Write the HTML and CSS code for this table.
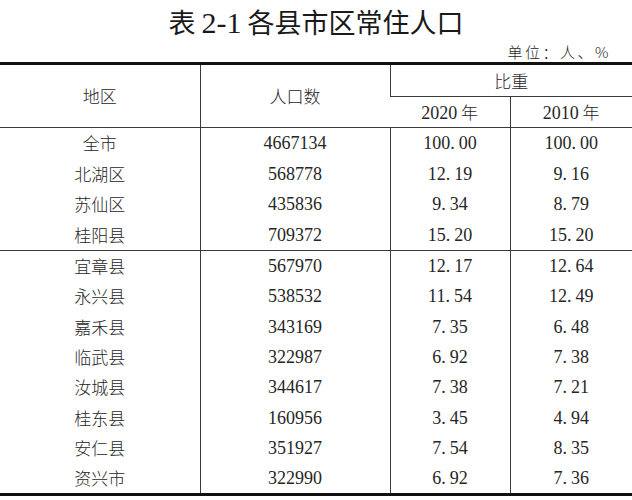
FILE: index.html
```html
<!DOCTYPE html>
<html lang="zh-CN">
<head>
<meta charset="utf-8">
<title>表 2-1 各县市区常住人口</title>
<link rel="stylesheet" href="styles.css">
</head>
<body>
<div class="page">
  <h1 class="title"><span class="cjk">表</span> <span class="num">2-1</span> <span class="cjk">各县市区常住人口</span></h1>
  <div class="unit">单位：人、%</div>
  <table class="data">
    <colgroup>
      <col class="c1"><col class="c2"><col class="c3"><col class="c4">
    </colgroup>
    <thead>
      <tr class="h1row">
        <th rowspan="2">地区</th>
        <th rowspan="2">人口数</th>
        <th colspan="2" class="share">比重</th>
      </tr>
      <tr class="h2row">
        <th class="yr"><span class="num">2020</span> 年</th>
        <th class="yr"><span class="num">2010</span> 年</th>
      </tr>
    </thead>
    <tbody class="g1">
      <tr><td>全市</td><td class="num">4667134</td><td class="num">100<span class="pt">.</span>00</td><td class="num">100<span class="pt">.</span>00</td></tr>
      <tr><td>北湖区</td><td class="num">568778</td><td class="num">12<span class="pt">.</span>19</td><td class="num">9<span class="pt">.</span>16</td></tr>
      <tr><td>苏仙区</td><td class="num">435836</td><td class="num">9<span class="pt">.</span>34</td><td class="num">8<span class="pt">.</span>79</td></tr>
      <tr><td>桂阳县</td><td class="num">709372</td><td class="num">15<span class="pt">.</span>20</td><td class="num">15<span class="pt">.</span>20</td></tr>
    </tbody>
    <tbody class="g2">
      <tr><td>宜章县</td><td class="num">567970</td><td class="num">12<span class="pt">.</span>17</td><td class="num">12<span class="pt">.</span>64</td></tr>
      <tr><td>永兴县</td><td class="num">538532</td><td class="num">11<span class="pt">.</span>54</td><td class="num">12<span class="pt">.</span>49</td></tr>
      <tr><td>嘉禾县</td><td class="num">343169</td><td class="num">7<span class="pt">.</span>35</td><td class="num">6<span class="pt">.</span>48</td></tr>
      <tr><td>临武县</td><td class="num">322987</td><td class="num">6<span class="pt">.</span>92</td><td class="num">7<span class="pt">.</span>38</td></tr>
      <tr><td>汝城县</td><td class="num">344617</td><td class="num">7<span class="pt">.</span>38</td><td class="num">7<span class="pt">.</span>21</td></tr>
      <tr><td>桂东县</td><td class="num">160956</td><td class="num">3<span class="pt">.</span>45</td><td class="num">4<span class="pt">.</span>94</td></tr>
      <tr><td>安仁县</td><td class="num">351927</td><td class="num">7<span class="pt">.</span>54</td><td class="num">8<span class="pt">.</span>35</td></tr>
      <tr><td>资兴市</td><td class="num">322990</td><td class="num">6<span class="pt">.</span>92</td><td class="num">7<span class="pt">.</span>36</td></tr>
    </tbody>
  </table>
</div>
</body>
</html>
```
FILE: styles.css
```css
html, body {
  margin: 0;
  padding: 0;
  background: #ffffff;
}
body {
  width: 632px;
  height: 500px;
  overflow: hidden;
  color: #262626;
  font-family: "Noto Sans CJK SC", "Noto Sans", sans-serif;
}
.page {
  display: flex;
  flex-direction: column;
}
.num {
  font-family: "Liberation Serif", "Noto Sans CJK SC", serif;
}
.title {
  margin: 0;
  padding-top: 7px;
  height: 30px;
  line-height: 30px;
  font-size: 27px;
  font-weight: 400;
  text-align: center;
  color: #1a1a1a;
}
.title .num {
  font-size: 30px;
}
.unit {
  margin-top: 5px;
  height: 20px;
  line-height: 20px;
  font-size: 15px;
  font-weight: 300;
  letter-spacing: 2.5px;
  text-align: right;
  padding-right: 21px;
}
.data {
  width: 632px;
  table-layout: fixed;
  border-collapse: collapse;
  border-top: 3px solid #111;
  border-bottom: 3px solid #111;
  font-size: 17px;
  font-weight: 300;
}
.c1 { width: 200px; }
.c2 { width: 190px; }
.c3 { width: 120px; }
.c4 { width: 122px; }
.data th, .data td {
  padding: 0;
  text-align: center;
  font-weight: 300;
  border-left: 1px solid #3a3a3a;
  line-height: 20px;
}
.data th:first-child, .data td:first-child {
  border-left: none;
}
.h1row th {
  height: 31px;
}
.h2row th {
  height: 30px;
}
.share {
  border-bottom: 1px solid #3a3a3a;
}
thead {
  border-bottom: 1px solid #3a3a3a;
}
.g1 {
  border-bottom: 1px solid #3a3a3a;
}
.g1 td {
  height: 30.5px;
}
.g2 td {
  height: 30.3px;
}
td.num, .yr .num {
  font-size: 18px;
  font-weight: 400;
}
.pt {
  letter-spacing: 4px;
}
```
